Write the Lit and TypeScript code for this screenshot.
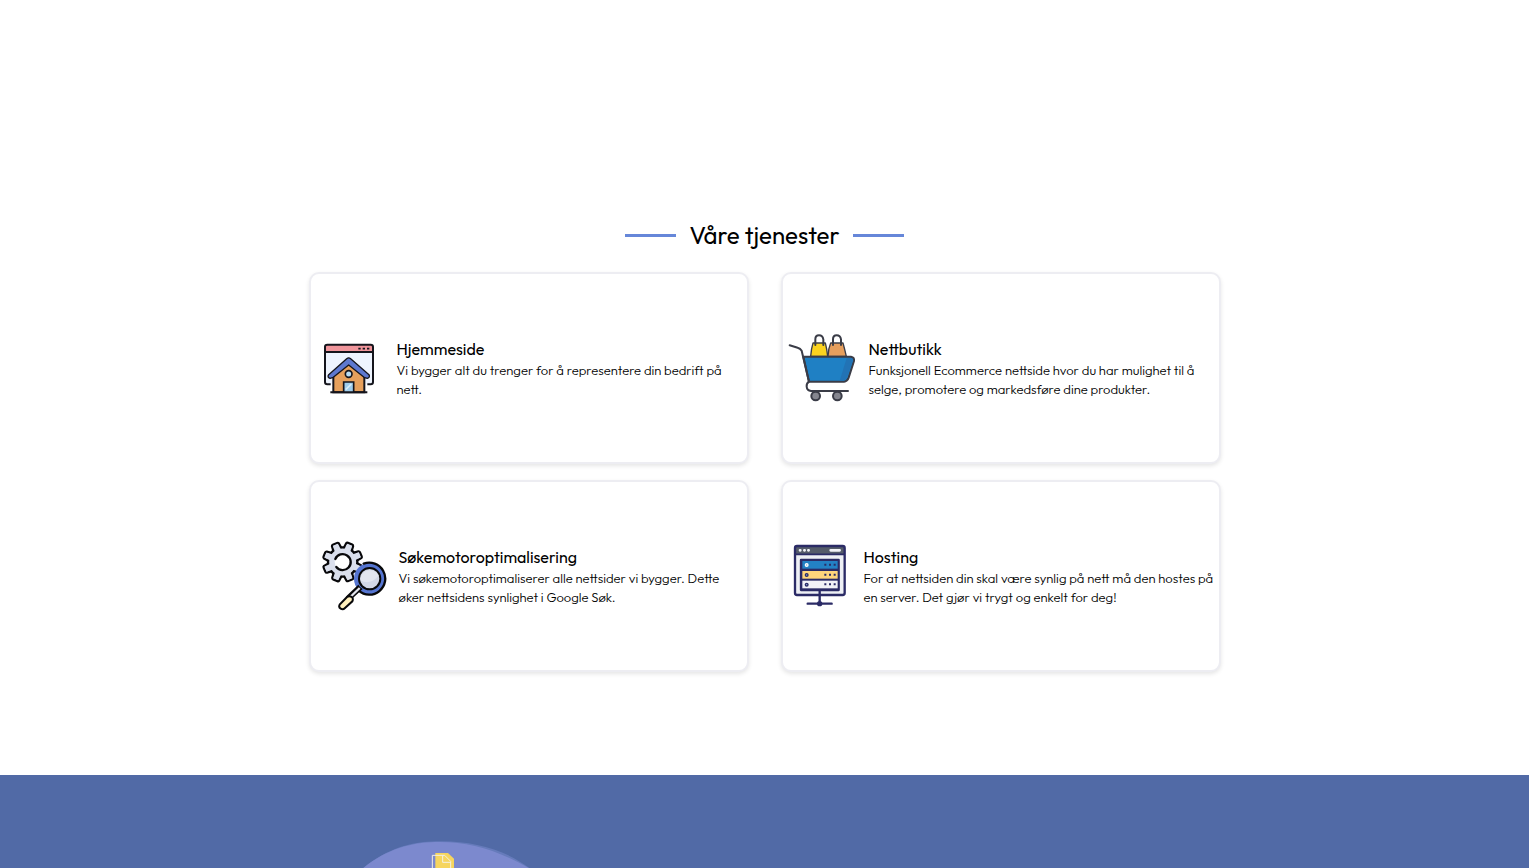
import { LitElement, html, css, svg, TemplateResult } from "lit";
import { customElement, property } from "lit/decorators.js";

const homeIcon = html`<svg width="70" height="70" viewBox="1 -6 210 210" aria-hidden="true">
  <path d="M31 51V141Q31 148 38 148H168Q175 148 175 141V51Z" fill="#eef4fe" />
  <path d="M31 51V35Q31 29 38 29H168Q175 29 175 35V51Z" fill="#f0959b" />
  <path d="M48 148H38Q31 148 31 141V35Q31 29 38 29H168Q175 29 175 35V141Q175 148 168 148H158M31 51H175" fill="none" stroke="#15151c" stroke-width="6" />
  <path d="M131 41H138M144 41H151M157 41H164" stroke="#15151c" stroke-width="5" />
  <path d="M56 172V116L102 78L149 116V172Z" fill="#e6a05c" stroke="#15151c" stroke-width="6" />
  <path d="M42 119Q37 127 46 130L54 128L102 90L150 128L158 130Q167 127 163 119L108 71Q102 66 96 71Z" fill="#5d78cf" stroke="#15151c" stroke-width="4" stroke-linejoin="round" />
  <circle cx="102" cy="117" r="10" fill="#b9def4" stroke="#15151c" stroke-width="5" />
  <path d="M87 172V141H117V172" fill="#9fcdec" stroke="#15151c" stroke-width="5" />
  <path d="M93 164L110 147" stroke="#d9effb" stroke-width="5" />
  <path d="M47 172H158" stroke="#15151c" stroke-width="6" />
</svg>`;

const cartIcon = html`<svg width="70" height="70" viewBox="6 9 210 210" aria-hidden="true">
  <g stroke="#3a3c47" stroke-width="6" stroke-linecap="round" stroke-linejoin="round">
    <path d="M84 39H121Q126 58 128 79H77Q79 55 84 39Z" fill="#fbd31f" stroke-width="4" />
    <path d="M137 39H174Q179 57 184 79H129Q130 55 137 39Z" fill="#e69f5d" stroke-width="4" />
    <path d="M91 45V28Q91 16 102 16T115 28V45M144 45V28Q144 16 155 16T168 28V45" fill="none" />
    <path d="M55 80H198Q209 82 207 93L191 143Q187 154 177 155H72Z" fill="#1f80c4" />
    <path d="M185 84H199Q205 86 203 93L187 142Q184 150 177 152H164Z" fill="#2273b5" stroke="none" />
    <path d="M14 46L38 53Q46 55 50 62L72 155Q64 160 65 170Q66 182 78 183H189" fill="none" />
    <circle cx="92" cy="198" r="13" fill="#85868f" />
    <circle cx="157" cy="198" r="13" fill="#85868f" />
  </g>
</svg>`;

const gearTeeth = [0, 45, 90, 135, 180, 225, 270, 315];
const seoIcon = html`<svg width="72" height="70" viewBox="0 18 216 210" aria-hidden="true">
  ${gearTeeth.map(
    (a) => svg`<path transform=${`rotate(${a + 22} 83 81)`} d="M70 44L72 25Q73 22 76 22H90Q93 22 94 25L96 44" fill="#dadfec" stroke="#08080a" stroke-width="7" stroke-linejoin="round" />`
  )}
  <circle cx="83" cy="81" r="44" fill="#dadfec" stroke="#08080a" stroke-width="7" />
  ${gearTeeth.map(
    (a) => svg`<path transform=${`rotate(${a + 22} 83 81)`} d="M73 48L75 25H91L93 48Z" fill="#dadfec" />`
  )}
  <circle cx="83" cy="81" r="24" fill="#fff" />
  <path d="M61 72A24 24 0 1 1 64 96" fill="none" stroke="#08080a" stroke-width="7" stroke-linecap="round" />
  <circle cx="164" cy="131" r="47" fill="#5575d1" />
  <path d="M146 86A48 48 0 1 1 131 167" fill="none" stroke="#08080a" stroke-width="7" stroke-linecap="round" />
  <path d="M102 188L136 156" stroke="#08080a" stroke-width="18" stroke-linecap="round" />
  <path d="M106 186L134 159" stroke="#e5e7ef" stroke-width="7" />
  <path d="M96 186L74 209Q70 217 77 221Q84 225 90 219L112 199Q116 190 110 186Q103 181 96 186Z" fill="#fff0bd" stroke="#08080a" stroke-width="6" />
  <circle cx="164" cy="131" r="38" fill="#5575d1" />
  <circle cx="164" cy="131" r="32" fill="#d2d7e6" stroke="#08080a" stroke-width="6" />
  <path d="M136 136Q164 152 191 122A29 29 0 0 0 136 136" fill="#e2e5ef" />
</svg>`;

const serverRows = [
  { y: 63, fill: "#2381c5", knob: "#ffffff" },
  { y: 93, fill: "#ffd57b", knob: "#2b2b66" },
  { y: 122, fill: "#f1f2f6", knob: "#2b2b66" },
];
const hostingIcon = html`<svg width="65" height="70" viewBox="6 3 195 210" aria-hidden="true">
  <rect x="30" y="18" width="149" height="147" rx="6" fill="#eef0f5" />
  <path d="M30 43V18H179V43Z" fill="#555c6a" />
  <rect x="30" y="18" width="149" height="147" rx="6" fill="none" stroke="#2b2b66" stroke-width="7" />
  <path d="M30 43H179" stroke="#2b2b66" stroke-width="5" />
  <path d="M45 31H46M58 31H59M70 31H71M137 31H164" stroke="#f2f3f7" stroke-width="8" stroke-linecap="round" />
  <path d="M48 60H161V150H48Z" fill="#2b2b66" stroke="#2b2b66" stroke-width="7" stroke-linejoin="round" />
  ${serverRows.map(
    (r) => svg`<g>
      <rect x="52" y=${r.y} width="106" height="23" fill=${r.fill} />
      <circle cx="65" cy=${r.y + 12} r="6" fill=${r.knob} />
      <circle cx="65" cy=${r.y + 12} r="2" fill="#8ab1d7" />
      <path d=${`M118 ${r.y + 11}H124M132 ${r.y + 11}H138M146 ${r.y + 11}H152`} stroke="#2b2b66" stroke-width="6" />
    </g>`
  )}
  <path d="M104 154V184M68 191H140" stroke="#2b2b66" stroke-width="7" stroke-linecap="round" />
  <circle cx="104" cy="191" r="6" fill="#2b2b66" stroke="#2b2b66" stroke-width="4" />
</svg>`;

interface Service {
  title: string;
  text: string;
  icon: TemplateResult;
}

const services: Service[] = [
  { title: "Hjemmeside", text: "Vi bygger alt du trenger for å representere din bedrift på nett.", icon: homeIcon },
  { title: "Nettbutikk", text: "Funksjonell Ecommerce nettside hvor du har mulighet til å selge, promotere og markedsføre dine produkter.", icon: cartIcon },
  { title: "Søkemotoroptimalisering", text: "Vi søkemotoroptimaliserer alle nettsider vi bygger. Dette øker nettsidens synlighet i Google Søk.", icon: seoIcon },
  { title: "Hosting", text: "For at nettsiden din skal være synlig på nett må den hostes på en server. Det gjør vi trygt og enkelt for deg!", icon: hostingIcon },
];

@customElement("service-card")
class ServiceCard extends LitElement {
  @property({ attribute: false }) service!: Service;

  static styles = css`
    :host {
      display: block;
    }
    .card {
      box-sizing: border-box;
      height: 100%;
      min-height: 192px;
      display: flex;
      align-items: center;
      gap: 12px;
      padding: 4px;
      border: 2px solid #ededf2;
      border-radius: 10px;
      background: #fff;
      box-shadow: 0 2px 4px rgba(0, 0, 0, 0.1);
    }
    svg {
      display: block;
      flex: none;
    }
    .title {
      margin: 0;
      font-size: 16px;
      line-height: 24px;
      font-weight: 400;
    }
    .text {
      margin: 0;
      font-size: 13px;
      line-height: 19px;
      font-weight: 300;
    }
  `;

  render() {
    return html`<article class="card">
      ${this.service.icon}
      <div>
        <h3 class="title">${this.service.title}</h3>
        <p class="text">${this.service.text}</p>
      </div>
    </article>`;
  }
}

@customElement("app-root")
class AppRoot extends LitElement {
  static styles = css`
    :host {
      display: flex;
      flex-direction: column;
      min-height: 100vh;
      background: #fff;
      color: #000;
      font-family: Outfit, Lato, sans-serif;
    }
    .services {
      padding: 219px 16px 103px;
    }
    .heading {
      display: flex;
      align-items: center;
      justify-content: center;
      gap: 13px;
      margin: 0 0 21px;
      font-size: 24px;
      line-height: 32px;
      font-weight: 400;
    }
    .rule {
      width: 51px;
      height: 3px;
      background: #6687d9;
    }
    .grid {
      display: grid;
      grid-template-columns: 1fr 1fr;
      gap: 16px 32px;
      max-width: 912px;
      margin: 0 auto;
    }
    .band {
      flex: 1;
      padding: 64px 16px 0;
      background: #516aa6;
    }
    .inner {
      max-width: 912px;
      margin: 0 auto;
    }
    .art {
      display: block;
      margin-left: 31px;
    }
    @media (max-width: 760px) {
      .grid {
        grid-template-columns: 1fr;
      }
      .services {
        padding-top: 64px;
      }
    }
  `;

  render() {
    return html`
      <section class="services">
        <h2 class="heading"><span class="rule"></span>Våre tjenester<span class="rule"></span></h2>
        <div class="grid">
          ${services.map((s) => html`<service-card .service=${s}></service-card>`)}
        </div>
      </section>
      <section class="band">
        <div class="inner">
          <svg class="art" width="220" height="29" viewBox="0 27 660 87" aria-hidden="true">
            <path d="M70 114C145 53 218 35 290 34C390 31 492 56 568 114Z" fill="#667bbb" />
            <path d="M70 114C142 56 215 38 285 36C380 33 470 58 566 114Z" fill="#7c89ce" />
            <path d="M286 114V69H324L342 86V114Z" fill="#f6d55f" />
            <path d="M277 114V76H314L332 94V114M308 76V97H332" fill="none" stroke="#f3f0e4" stroke-width="3" />
          </svg>
        </div>
      </section>
    `;
  }
}
